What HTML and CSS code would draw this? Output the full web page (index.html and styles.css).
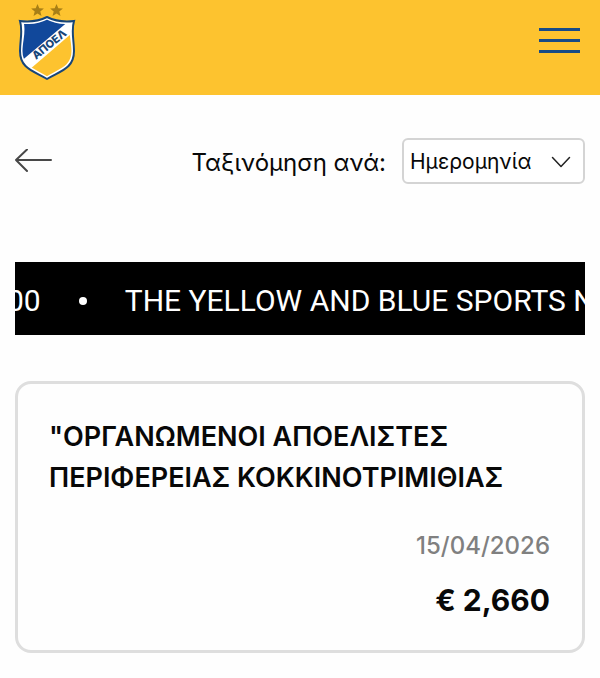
FILE: index.html
```
<!DOCTYPE html>
<html lang="el">
<head>
<meta charset="utf-8">
<meta name="viewport" content="width=device-width, initial-scale=1">
<title>ΑΠΟΕΛ</title>
<link rel="stylesheet" href="styles.css">
</head>
<body>
<header class="header">
  <a class="logo" href="#" aria-label="ΑΠΟΕΛ">
    <svg width="60" height="80" viewBox="0 0 60 80">
      <g fill="#a87f16">
        <path d="M19.500 4l1.800 4.300 4.600.300-3.600 3 1.200 4.500-4-2.500-4 2.500 1.200-4.500-3.600-3 4.600-.300z"/>
        <path d="M38.500 4l1.800 4.300 4.600.300-3.600 3 1.200 4.500-4-2.500-4 2.500 1.200-4.500-3.600-3 4.600-.300z"/>
      </g>
      <clipPath id="shield"><path d="M4 22Q18 24 29 18Q40 24 54 22C51 31 55 40 55 51C55 68 41 70 29 78C17 70 3 68 3 51C3 40 7 31 4 22Z"/></clipPath>
      <g clip-path="url(#shield)">
        <path fill="#fff" d="M0 15h60v65H0z"/>
        <path fill="#11489b" d="M0 15h52V20L2 62H0z"/>
        <path fill="#fdc32f" d="M60 28L11 70v10h49z"/>
      </g>
      <path fill="none" stroke="#fff" stroke-width="3" d="M4 22Q18 24 29 18Q40 24 54 22C51 31 55 40 55 51C55 68 41 70 29 78C17 70 3 68 3 51C3 40 7 31 4 22Z"/>
      <path fill="none" stroke="#174578" stroke-width="2" d="M2 21Q17 23 29 17Q41 23 56 21C53 31 56 40 56 51C56 69 42 71 29 79C16 71 2 69 2 51C2 40 5 31 2 21Z"/>
      <text class="logo-text" transform="translate(18 60) rotate(-39)">ΑΠΟΕΛ</text>
    </svg>
  </a>
  <button class="menu" type="button" aria-label="Μενού"><span></span><span></span><span></span></button>
</header>
<main class="content">
  <div class="toolbar">
    <a class="back" href="#" aria-label="Πίσω">
      <svg width="38" height="24" viewBox="0 0 38 24" fill="none" stroke="#484848" stroke-width="2" stroke-linecap="round" stroke-linejoin="round"><path d="M36 11H1M12 0.500L1 11l11 11"/></svg>
    </a>
    <label class="sort-label" for="sort">Ταξινόμηση ανά:</label>
    <div class="select-wrap">
      <select id="sort" class="select"><option>Ημερομηνία</option></select>
      <svg class="chevron" width="20" height="12" viewBox="0 0 20 12" fill="none" stroke="#222" stroke-width="1.500" stroke-linecap="round" stroke-linejoin="round"><path d="M1.500 1.500l8.500 9 8.500-9"/></svg>
    </div>
  </div>
  <div class="ticker">
    <div class="track"><span>00</span><span class="dot"></span><span>THE YELLOW AND BLUE SPORTS N</span></div>
  </div>
  <article class="card">
    <h2 class="title">"ΟΡΓΑΝΩΜΕΝΟΙ ΑΠΟΕΛΙΣΤΕΣ ΠΕΡΙΦΕΡΕΙΑΣ ΚΟΚΚΙΝΟΤΡΙΜΙΘΙΑΣ</h2>
    <time class="date" datetime="2026-04-15">15/04/2026</time>
    <p class="amount">€ 2,660</p>
  </article>
</main>
</body>
</html>
```
FILE: styles.css
```
* { box-sizing: border-box; }
body { margin: 0; background: #fefefe; color: #080808; font-family: Inter, "Open Sans", sans-serif; }
.header { display: flex; justify-content: space-between; align-items: flex-start; min-height: 95px; padding: 0 20px 0 18px; background: #fdc32f; }
.logo { display: block; }
.logo svg { display: block; }
.logo-text { font: 800 11px Inter, sans-serif; fill: #174578; }
.menu { display: flex; flex-direction: column; gap: 8px; width: 41px; margin-top: 28px; padding: 0; border: 0; background: none; }
.menu span { width: 100%; height: 3px; background: #174b87; }
.content { padding: 43px 15px 24px; }
.toolbar { display: flex; align-items: center; }
.back { display: flex; margin-right: auto; }
.sort-label { margin-right: 16px; padding-top: 2px; font-size: 24px; }
.select-wrap { position: relative; width: 183px; }
.select { display: block; width: 100%; height: 46px; padding: 0 40px 0 6px; appearance: none; border: 2px solid #d4d4d4; border-radius: 6px; background: #fff; color: #080808; font-family: inherit; font-size: 21px; }
.chevron { position: absolute; right: 14px; top: 18px; pointer-events: none; }
.ticker { overflow: hidden; margin-top: 78px; padding-top: 5px; background: #000; color: #fff; }
.track { display: flex; align-items: center; gap: 38px; margin-left: -8px; font-family: Roboto, sans-serif; font-size: 30px; line-height: 68px; white-space: nowrap; }
.dot { flex: none; width: 8px; height: 8px; border-radius: 50%; background: #fff; }
.card { display: flex; flex-direction: column; margin-top: 46px; padding: 32px 32px 30px 31px; border: 3px solid #dedede; border-radius: 16px; }
.title { margin: 0; font-size: 27px; line-height: 41px; font-weight: 600; }
.date { margin-top: 32px; align-self: flex-end; color: #808080; font-size: 24px; line-height: 32px; font-weight: 500; }
.amount { margin: 18px 0 0; align-self: flex-end; font-size: 30px; line-height: 40px; font-weight: 700; }
```
